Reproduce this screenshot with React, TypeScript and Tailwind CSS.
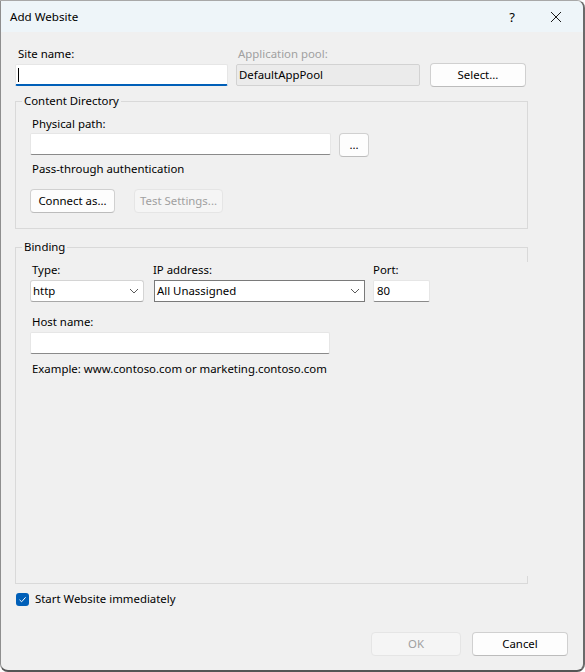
import React from 'react';

const font = { fontFamily: '"Noto Sans", "Segoe UI", Arial, sans-serif' };

const Chevron = () => (
  <svg width="10" height="6" viewBox="0 0 10 6" className="shrink-0">
    <path d="M1 1 L5 5 L9 1" fill="none" stroke="#5a5a5a" strokeWidth="1" />
  </svg>
);

const Button = ({ children, disabled, className = '' }: { children: React.ReactNode; disabled?: boolean; className?: string }) => (
  <div
    className={
      'h-[24px] flex items-center justify-center rounded-[4px] border ' +
      (disabled
        ? 'bg-[#f5f5f5] border-[#e5e5e5] text-[#a0a0a0] '
        : 'bg-[#fdfdfd] border-[#d0d0d0] border-b-[#bcbcbc] text-black ') +
      className
    }
  >
    {children}
  </div>
);

const TextBox = ({ className = '', children }: { className?: string; children?: React.ReactNode }) => (
  <div
    className={
      'h-[22px] bg-white border border-[#e6e6e6] border-b-[#8a8a8a] rounded-[2px] flex items-center px-[3px] ' +
      className
    }
  >
    {children}
  </div>
);

export default function App() {
  return (
    <div className="bg-white w-[585px] h-[672px]" style={font}>
      <div className="w-[585px] h-[672px] bg-[#f0f0f0] border-l border-t border-l-[#8e8e8e] border-t-[#a8a8a8] border-r-2 border-b-2 border-r-[#6a6a6a] border-b-[#555555] rounded-tr-[8px] rounded-b-[8px] overflow-hidden flex flex-col text-black text-[11.4px] leading-[16px]">
        {/* title bar */}
        <div className="h-[31px] shrink-0 bg-[#eef5f9] flex items-center pl-[9px]">
          <span className="flex-1 text-[11.6px]">Add Website</span>
          <span className="w-[20px] text-center text-[13px] mr-[28px]">?</span>
          <svg width="12" height="12" viewBox="0 0 12 12" className="mr-[21px]">
            <path d="M1 1 L11 11 M11 1 L1 11" stroke="#1a1a1a" strokeWidth="1" fill="none" />
          </svg>
        </div>

        <div className="flex-1 flex flex-col pl-[14px] pr-[15px] pt-[14px]">
          {/* site name / app pool */}
          <div className="flex">
            <div className="w-[221px] pl-[3px]">Site name:</div>
            <div className="w-[194px] pl-[2px] text-[#a0a0a0]">Application pool:</div>
          </div>
          <div className="flex items-center mt-px">
            <div className="w-[213px] h-[22px] bg-white border border-[#e6e6e6] border-b-2 border-b-[#005fb8] rounded-[2px] flex items-center pl-[2px]">
              <div className="w-px h-[14px] bg-black" />
            </div>
            <div className="w-[184px] h-[22px] ml-[8px] bg-[#ebebeb] border border-[#d2d2d2] rounded-[2px] flex items-center px-[2px]">
              DefaultAppPool
            </div>
            <Button className="w-[96px] ml-[10px]">Select...</Button>
          </div>

          {/* content directory */}
          <fieldset className="w-[513px] mt-[6px] border border-[#d9d9d9]">
            <legend className="ml-[6px] px-[2px] leading-[16px]">Content Directory</legend>
            <div className="pl-[14px] pt-[7px] pb-[15px]">
              <div className="pl-[2px]">Physical path:</div>
              <div className="flex items-start mt-[1px]">
                <TextBox className="w-[301px]" />
                <Button className="w-[30px] ml-[8px]">...</Button>
              </div>
              <div className="pl-[2px] mt-[4px]">Pass-through authentication</div>
              <div className="flex mt-[12px]">
                <Button className="w-[85px]">Connect as...</Button>
                <Button disabled className="w-[89px] ml-[19px]">Test Settings...</Button>
              </div>
            </div>
          </fieldset>

          {/* binding */}
          <div className="relative w-[513px] mt-[10px]">
            <fieldset className="h-[345px] border border-[#d9d9d9] border-r-0">
              <legend className="ml-[6px] px-[2px] leading-[16px]">Binding</legend>
              <div className="pl-[14px] pt-[7px]">
                <div className="flex">
                  <div className="w-[123px] pl-[2px]">Type:</div>
                  <div className="w-[220px]">IP address:</div>
                  <div>Port:</div>
                </div>
                <div className="flex mt-[2px]">
                  <div className="w-[114px] h-[22px] bg-white border border-[#d4d4d4] border-b-[#a8a8a8] rounded-[3px] flex items-center pl-[2px] pr-[4px]">
                    <span className="flex-1">http</span>
                    <Chevron />
                  </div>
                  <div className="w-[211px] h-[22px] ml-[10px] bg-white border border-[#7a7a7a] flex items-center pl-[2px] pr-[4px]">
                    <span className="flex-1">All Unassigned</span>
                    <Chevron />
                  </div>
                  <TextBox className="w-[57px] ml-[8px] px-[2px]">80</TextBox>
                </div>
                <div className="pl-[2px] mt-[12px]">Host name:</div>
                <TextBox className="w-[300px] mt-[2px]" />
                <div className="pl-[2px] mt-[7px]">Example: www.contoso.com or marketing.contoso.com</div>
              </div>
            </fieldset>
            <div className="absolute right-0 top-[8px] w-px h-[15px] bg-[#d9d9d9]" />
            <div className="absolute right-0 bottom-0 w-px h-[8px] bg-[#d9d9d9]" />
          </div>

          {/* start immediately */}
          <div className="flex items-center mt-[7px]">
            <div className="w-[13px] h-[13px] ml-px rounded-[3px] bg-[#005fb8] flex items-center justify-center">
              <svg width="9" height="9" viewBox="0 0 9 9">
                <path d="M1.5 4.8 L3.6 6.8 L7.6 2.3" fill="none" stroke="white" strokeWidth="1" />
              </svg>
            </div>
            <span className="ml-[6px]">Start Website immediately</span>
          </div>

          <div className="flex justify-end mt-[25px]">
            <Button disabled className="w-[90px]">OK</Button>
            <Button className="w-[96px] ml-[11px]">Cancel</Button>
          </div>
        </div>
      </div>
    </div>
  );
}
